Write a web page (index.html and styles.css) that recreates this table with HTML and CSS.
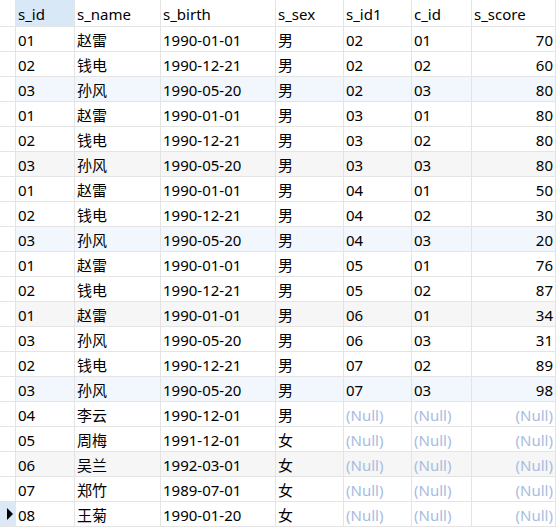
FILE: index.html
```html
<!DOCTYPE html>
<html lang="zh">
<head>
<meta charset="utf-8">
<title>grid</title>
<link rel="stylesheet" href="styles.css">
</head>
<body>
<div class="grid">
  <div class="row head">
    <div class="c ind"></div>
    <div class="c sel">s_id</div>
    <div class="c">s_name</div>
    <div class="c">s_birth</div>
    <div class="c">s_sex</div>
    <div class="c">s_id1</div>
    <div class="c">c_id</div>
    <div class="c">s_score</div>
  </div>
  <div class="row"><div class="c ind"></div><div class="c">01</div><div class="c">赵雷</div><div class="c">1990-01-01</div><div class="c">男</div><div class="c">02</div><div class="c">01</div><div class="c num">70</div></div>
  <div class="row"><div class="c ind"></div><div class="c">02</div><div class="c">钱电</div><div class="c">1990-12-21</div><div class="c">男</div><div class="c">02</div><div class="c">02</div><div class="c num">60</div></div>
  <div class="row blue"><div class="c ind"></div><div class="c">03</div><div class="c">孙风</div><div class="c">1990-05-20</div><div class="c">男</div><div class="c">02</div><div class="c">03</div><div class="c num">80</div></div>
  <div class="row"><div class="c ind"></div><div class="c">01</div><div class="c">赵雷</div><div class="c">1990-01-01</div><div class="c">男</div><div class="c">03</div><div class="c">01</div><div class="c num">80</div></div>
  <div class="row"><div class="c ind"></div><div class="c">02</div><div class="c">钱电</div><div class="c">1990-12-21</div><div class="c">男</div><div class="c">03</div><div class="c">02</div><div class="c num">80</div></div>
  <div class="row grey"><div class="c ind"></div><div class="c">03</div><div class="c">孙风</div><div class="c">1990-05-20</div><div class="c">男</div><div class="c">03</div><div class="c">03</div><div class="c num">80</div></div>
  <div class="row"><div class="c ind"></div><div class="c">01</div><div class="c">赵雷</div><div class="c">1990-01-01</div><div class="c">男</div><div class="c">04</div><div class="c">01</div><div class="c num">50</div></div>
  <div class="row"><div class="c ind"></div><div class="c">02</div><div class="c">钱电</div><div class="c">1990-12-21</div><div class="c">男</div><div class="c">04</div><div class="c">02</div><div class="c num">30</div></div>
  <div class="row blue"><div class="c ind"></div><div class="c">03</div><div class="c">孙风</div><div class="c">1990-05-20</div><div class="c">男</div><div class="c">04</div><div class="c">03</div><div class="c num">20</div></div>
  <div class="row"><div class="c ind"></div><div class="c">01</div><div class="c">赵雷</div><div class="c">1990-01-01</div><div class="c">男</div><div class="c">05</div><div class="c">01</div><div class="c num">76</div></div>
  <div class="row"><div class="c ind"></div><div class="c">02</div><div class="c">钱电</div><div class="c">1990-12-21</div><div class="c">男</div><div class="c">05</div><div class="c">02</div><div class="c num">87</div></div>
  <div class="row grey"><div class="c ind"></div><div class="c">01</div><div class="c">赵雷</div><div class="c">1990-01-01</div><div class="c">男</div><div class="c">06</div><div class="c">01</div><div class="c num">34</div></div>
  <div class="row"><div class="c ind"></div><div class="c">03</div><div class="c">孙风</div><div class="c">1990-05-20</div><div class="c">男</div><div class="c">06</div><div class="c">03</div><div class="c num">31</div></div>
  <div class="row"><div class="c ind"></div><div class="c">02</div><div class="c">钱电</div><div class="c">1990-12-21</div><div class="c">男</div><div class="c">07</div><div class="c">02</div><div class="c num">89</div></div>
  <div class="row blue"><div class="c ind"></div><div class="c">03</div><div class="c">孙风</div><div class="c">1990-05-20</div><div class="c">男</div><div class="c">07</div><div class="c">03</div><div class="c num">98</div></div>
  <div class="row"><div class="c ind"></div><div class="c">04</div><div class="c">李云</div><div class="c">1990-12-01</div><div class="c">男</div><div class="c null">(Null)</div><div class="c null">(Null)</div><div class="c num null">(Null)</div></div>
  <div class="row"><div class="c ind"></div><div class="c">05</div><div class="c">周梅</div><div class="c">1991-12-01</div><div class="c">女</div><div class="c null">(Null)</div><div class="c null">(Null)</div><div class="c num null">(Null)</div></div>
  <div class="row grey"><div class="c ind"></div><div class="c">06</div><div class="c">吴兰</div><div class="c">1992-03-01</div><div class="c">女</div><div class="c null">(Null)</div><div class="c null">(Null)</div><div class="c num null">(Null)</div></div>
  <div class="row"><div class="c ind"></div><div class="c">07</div><div class="c">郑竹</div><div class="c">1989-07-01</div><div class="c">女</div><div class="c null">(Null)</div><div class="c null">(Null)</div><div class="c num null">(Null)</div></div>
  <div class="row"><div class="c ind cur"><span class="arrow"></span></div><div class="c">08</div><div class="c">王菊</div><div class="c">1990-01-20</div><div class="c">女</div><div class="c null">(Null)</div><div class="c null">(Null)</div><div class="c num null">(Null)</div></div>
</div>
</body>
</html>
```

FILE: styles.css
```css
html, body {
  margin: 0;
  padding: 0;
  background: #ffffff;
}

.grid {
  display: flex;
  flex-direction: column;
  width: 556px;
  font-family: "Noto Sans", "Noto Sans CJK SC", sans-serif;
  font-size: 15px;
  color: #000000;
}

.row {
  display: grid;
  grid-template-columns: 16px 59px 86px 115px 68px 68px 60px 84px;
  height: 25px;
}

.row.head {
  height: 27px;
}

.c {
  box-sizing: border-box;
  border-right: 1px solid #e4e4e4;
  border-bottom: 1px solid #e4e4e4;
  padding: 0 2px;
  line-height: 26px;
  height: 100%;
  overflow: hidden;
  white-space: nowrap;
}

.head .c {
  line-height: 29px;
}

.row.blue .c {
  background: #f2f7fd;
}

.row.grey .c {
  background: #f6f6f6;
}

.row .c.ind {
  background: #ffffff;
  padding: 0;
}

.row .c.ind.cur {
  background: #dbe8f6;
  display: flex;
  align-items: center;
  padding-left: 7px;
}

.arrow {
  width: 0;
  height: 0;
  border-left: 6px solid #000000;
  border-top: 6px solid transparent;
  border-bottom: 6px solid transparent;
}

.c.sel {
  background: #d9e8f7;
}

.c.num {
  text-align: right;
}

.c.null {
  color: #a8bcdf;
}
```
